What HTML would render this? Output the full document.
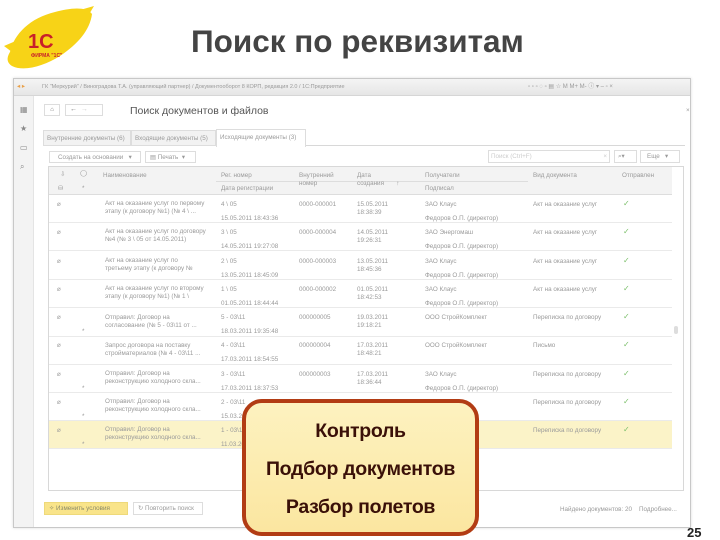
<!DOCTYPE html>
<html><head><meta charset="utf-8"><style>
*{margin:0;padding:0;box-sizing:border-box}
body{width:720px;height:540px;background:#fff;position:relative;overflow:hidden;font-family:"Liberation Sans","DejaVu Sans",sans-serif}
.a{position:absolute;white-space:nowrap}
.t{font-size:6.3px;color:#9a9a9a;line-height:8px}
.row{position:absolute;left:49px;width:623px;height:28px;border-bottom:1px solid #eaeaea}
.chk{color:#7bbf6a;font-size:8px}
</style></head><body>
<!-- logo -->
<svg class="a" style="left:0;top:2px" width="100" height="76" viewBox="0 0 100 76">
<path d="M10 50 C14 32 30 16 55 10 C70 6 86 4 92 12 C90 28 78 42 60 54 C44 64 24 70 12 64 C6 60 7 55 10 50Z" fill="#f7d317"/>
<path d="M4 44 L18 38 L12 50Z M80 8 L94 4 L88 14Z" fill="#f7d317"/>
<text x="28" y="46" font-family="Liberation Sans" font-weight="bold" font-size="20" fill="#c8202a">1С</text>
<text x="31" y="55" font-family="Liberation Sans" font-weight="bold" font-size="5" fill="#c8202a">ФИРМА "1С"</text>
</svg>
<div class="a" style="left:191px;top:23px;font-size:31.5px;font-weight:bold;color:#444">Поиск по реквизитам</div>
<!-- window -->
<div class="a" style="left:13px;top:78px;width:678px;height:450px;border:1px solid #c8c8c8;background:#fff;box-shadow:0 0 3px #ddd"></div>
<div class="a" style="left:14px;top:79px;width:676px;height:17px;background:linear-gradient(#f4f4f4,#e6e6e6);border-bottom:1px solid #d6d6d6"></div>
<div class="a t" style="left:17px;top:83px;color:#e9a14a">◂ ▸</div>
<div class="a t" style="left:42px;top:83px;font-size:5.5px">ГК "Меркурий" / Виноградова Т.А. (управляющий партнер) / Документооборот 8 КОРП, редакция 2.0 / 1С:Предприятие</div>
<div class="a t" style="left:528px;top:83px;font-size:6px">▫ ▫ ▫ ◌ ▫ ▤ ☆ M M+ M- ⓘ ▾ – ▫ ×</div>
<div class="a" style="left:14px;top:96px;width:20px;height:431px;background:#f3f3f3;border-right:1px solid #e4e4e4"></div>
<div class="a t" style="left:20px;top:100px;font-size:8px;line-height:19px;color:#888">▦<br>★<br>▭<br>⌕</div>
<div class="a" style="left:44px;top:104px;width:16px;height:12px;border:1px solid #ddd;font-size:6px;color:#777;text-align:center;line-height:10px">⌂</div>
<div class="a" style="left:65px;top:104px;width:38px;height:12px;border:1px solid #ddd;font-size:7px;color:#777;line-height:10px;padding-left:4px">← &nbsp;<span style="color:#ccc">→</span></div>
<div class="a" style="left:130px;top:105px;font-size:10.5px;color:#555">Поиск документов и файлов</div>
<div class="a t" style="left:686px;top:107px">×</div>
<!-- tabs -->
<div class="a" style="left:43px;top:130px;width:642px;height:16px;border-bottom:1px solid #d8d8d8"></div>
<div class="a t" style="left:43px;top:130px;height:16px;width:88px;border:1px solid #ddd;background:#f2f2f2;padding:4px 3px">Внутренние документы (6)</div>
<div class="a t" style="left:131px;top:130px;height:16px;width:85px;border:1px solid #ddd;background:#f2f2f2;padding:4px 3px">Входящие документы (5)</div>
<div class="a t" style="left:216px;top:129px;height:18px;width:90px;border:1px solid #ddd;border-bottom:none;background:#fff;padding:4px 3px">Исходящие документы (3)</div>
<!-- toolbar -->
<div class="a t" style="left:49px;top:151px;height:12px;width:92px;border:1px solid #ddd;padding:2px 8px">Создать на основании &nbsp;&nbsp;▾</div>
<div class="a t" style="left:145px;top:151px;height:12px;width:51px;border:1px solid #ddd;padding:2px 4px">▤ Печать &nbsp;▾</div>
<div class="a t" style="left:488px;top:150px;height:13px;width:122px;border:1px solid #ddd;padding:2px 2px;color:#ccc">Поиск (Ctrl+F) <span style="float:right">×</span></div>
<div class="a t" style="left:614px;top:150px;height:13px;width:23px;border:1px solid #ddd;padding:2px 3px">⌕▾</div>
<div class="a t" style="left:640px;top:150px;height:13px;width:40px;border:1px solid #ddd;padding:2px 6px">Еще &nbsp;&nbsp;▾</div>
<!-- table -->
<div class="a" style="left:48px;top:166px;width:636px;height:325px;border:1px solid #d8d8d8"></div>
<div class="a" style="left:49px;top:167px;width:623px;height:28px;background:#f3f3f3;border-bottom:1px solid #ddd"></div>
<div class="a" style="left:216px;top:181px;width:202px;border-top:1px solid #ddd"></div>
<div class="a" style="left:418px;top:181px;width:110px;border-top:1px solid #ddd"></div>
<div class="a t" style="left:60px;top:171px">⇩</div><div class="a t" style="left:80px;top:170px">◯</div>
<div class="a t" style="left:58px;top:185px">⛁</div><div class="a t" style="left:82px;top:185px">*</div>
<div class="a t" style="left:103px;top:172px">Наименование</div>
<div class="a t" style="left:221px;top:172px">Рег. номер</div>
<div class="a t" style="left:221px;top:185px">Дата регистрации</div>
<div class="a t" style="left:299px;top:172px">Внутренний<br>номер</div>
<div class="a t" style="left:357px;top:172px">Дата<br>создания &nbsp;&nbsp;&nbsp;&nbsp;&nbsp;&nbsp;↑</div>
<div class="a t" style="left:425px;top:172px">Получатели</div>
<div class="a t" style="left:425px;top:185px">Подписал</div>
<div class="a t" style="left:533px;top:172px">Вид документа</div>
<div class="a t" style="left:622px;top:172px">Отправлен</div>
<!-- rows -->
<div class="row" style="top:195px"></div>
<div class="row" style="top:223px"></div>
<div class="row" style="top:252px"></div>
<div class="row" style="top:280px"></div>
<div class="row" style="top:309px"></div>
<div class="row" style="top:337px"></div>
<div class="row" style="top:365px"></div>
<div class="row" style="top:393px"></div>
<div class="row" style="top:421px;background:#fbf3c8"></div>
<div class="a t" style="left:57px;top:191px;line-height:28.3px">⌀<br>⌀<br>⌀<br>⌀<br>⌀<br>⌀<br>⌀<br>⌀<br>⌀</div>
<div class="a t" style="left:82px;top:318px;line-height:28.3px">*<br><br>*<br>*<br>*</div>
<div class="a t" style="left:105px;top:200px">Акт на оказание услуг по первому<br>этапу (к договору №1) (№ 4 \ ...</div>
<div class="a t" style="left:105px;top:228px">Акт на оказание услуг по договору<br>№4 (№ 3 \ 05 от 14.05.2011)</div>
<div class="a t" style="left:105px;top:257px">Акт на оказание услуг по<br>третьему этапу (к договору №</div>
<div class="a t" style="left:105px;top:285px">Акт на оказание услуг по второму<br>этапу (к договору №1) (№ 1 \</div>
<div class="a t" style="left:105px;top:314px">Отправил: Договор на<br>согласование (№ 5 - 03\11 от ...</div>
<div class="a t" style="left:105px;top:342px">Запрос договора на поставку<br>стройматериалов (№ 4 - 03\11 ...</div>
<div class="a t" style="left:105px;top:370px">Отправил: Договор на<br>реконструкцию холодного скла...</div>
<div class="a t" style="left:105px;top:398px">Отправил: Договор на<br>реконструкцию холодного скла...</div>
<div class="a t" style="left:105px;top:426px">Отправил: Договор на<br>реконструкцию холодного скла...</div>
<div class="a t" style="left:221px;top:191px;line-height:28.3px">4 \ 05<br>3 \ 05<br>2 \ 05<br>1 \ 05<br>5 - 03\11<br>4 - 03\11<br>3 - 03\11<br>2 - 03\11<br>1 - 03\11</div>
<div class="a t" style="left:221px;top:205px;line-height:28.3px">15.05.2011 18:43:36<br>14.05.2011 19:27:08<br>13.05.2011 18:45:09<br>01.05.2011 18:44:44<br>18.03.2011 19:35:48<br>17.03.2011 18:54:55<br>17.03.2011 18:37:53<br>15.03.2011 18:22:11<br>11.03.2011 15:28:11</div>
<div class="a t" style="left:299px;top:191px;line-height:28.3px">0000-000001<br>0000-000004<br>0000-000003<br>0000-000002<br>000000005<br>000000004<br>000000003<br>000000002<br>000000001</div>
<div class="a t" style="left:357px;top:191px;line-height:28.3px">15.05.2011<br>14.05.2011<br>13.05.2011<br>01.05.2011<br>19.03.2011<br>17.03.2011<br>17.03.2011<br>16.03.2011<br>11.03.2011</div>
<div class="a t" style="left:357px;top:199px;line-height:28.3px">18:38:39<br>19:26:31<br>18:45:36<br>18:42:53<br>19:18:21<br>18:48:21<br>18:36:44<br>18:19:57<br>18:22:11</div>
<div class="a t" style="left:425px;top:191px;line-height:28.3px">ЗАО Клаус<br>ЗАО Энергомаш<br>ЗАО Клаус<br>ЗАО Клаус<br>ООО СтройКомплект<br>ООО СтройКомплект<br>ЗАО Клаус<br>ЗАО Клаус<br>ЗАО Клаус</div>
<div class="a t" style="left:425px;top:205px;line-height:28.3px">Федоров О.П. (директор)<br>Федоров О.П. (директор)<br>Федоров О.П. (директор)<br>Федоров О.П. (директор)<br><br><br>Федоров О.П. (директор)</div>
<div class="a t" style="left:533px;top:191px;line-height:28.3px">Акт на оказание услуг<br>Акт на оказание услуг<br>Акт на оказание услуг<br>Акт на оказание услуг<br>Переписка по договору<br>Письмо<br>Переписка по договору<br>Переписка по договору<br>Переписка по договору</div>
<div class="a chk" style="left:623px;top:190px;line-height:28.3px">✓<br>✓<br>✓<br>✓<br>✓<br>✓<br>✓<br>✓<br>✓</div>
<div class="a" style="left:674px;top:326px;width:4px;height:8px;background:#ddd;border-radius:2px"></div>
<!-- bottom -->
<div class="a t" style="left:44px;top:502px;width:84px;height:13px;background:#f9e48a;border:1px solid #eed97a;padding:2px 4px;color:#8a8a6a">✧ Изменить условия</div>
<div class="a t" style="left:133px;top:502px;width:70px;height:13px;border:1px solid #ddd;padding:2px 4px">↻ Повторить поиск</div>
<div class="a t" style="left:560px;top:506px">Найдено документов: 20 &nbsp;&nbsp;&nbsp;Подробнее...</div>
<!-- overlay -->
<div class="a" style="left:242px;top:399px;width:237px;height:137px;border:4px solid #b23c14;border-radius:20px;background:linear-gradient(#fdf2c0,#fbe6a0)"></div>
<div class="a" style="left:242px;top:420px;width:237px;text-align:center;font-size:19.5px;font-weight:bold;color:#3a1008;letter-spacing:-0.3px">Контроль</div>
<div class="a" style="left:242px;top:458px;width:237px;text-align:center;font-size:19.5px;font-weight:bold;color:#3a1008;letter-spacing:-0.3px">Подбор документов</div>
<div class="a" style="left:242px;top:496px;width:237px;text-align:center;font-size:19.5px;font-weight:bold;color:#3a1008;letter-spacing:-0.3px">Разбор полетов</div>
<div class="a" style="left:687px;top:525px;font-size:13px;font-weight:bold;color:#222">25</div>
</body></html>
